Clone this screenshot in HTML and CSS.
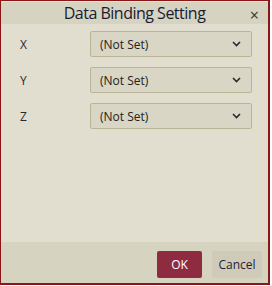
FILE: index.html
```html
<!DOCTYPE html>
<html>
<head>
<meta charset="utf-8">
<link rel="stylesheet" href="styles.css">
</head>
<body>
<div class="dialog">
  <div class="header">
    <span class="title">Data Binding Setting</span>
    <span class="close">×</span>
  </div>
  <div class="body">
    <div class="row">
      <span class="label">X</span>
      <div class="select"><span>(Not Set)</span><svg class="chev" width="9" height="6" viewBox="0 0 9 6"><path d="M1 1 L4.5 4.5 L8 1" fill="none" stroke="#2a2a2a" stroke-width="1.6"/></svg></div>
    </div>
    <div class="row">
      <span class="label">Y</span>
      <div class="select"><span>(Not Set)</span><svg class="chev" width="9" height="6" viewBox="0 0 9 6"><path d="M1 1 L4.5 4.5 L8 1" fill="none" stroke="#2a2a2a" stroke-width="1.6"/></svg></div>
    </div>
    <div class="row">
      <span class="label">Z</span>
      <div class="select"><span>(Not Set)</span><svg class="chev" width="9" height="6" viewBox="0 0 9 6"><path d="M1 1 L4.5 4.5 L8 1" fill="none" stroke="#2a2a2a" stroke-width="1.6"/></svg></div>
    </div>
  </div>
  <div class="footer">
    <button class="btn ok">OK</button>
    <button class="btn cancel">Cancel</button>
  </div>
</div>
</body>
</html>
```
FILE: styles.css
```css
html, body { margin: 0; padding: 0; background: #ffffff; }
body { font-family: "Open Sans", "Noto Sans", sans-serif; color: #1e1e2a; }
.dialog {
  box-sizing: border-box;
  width: 270px;
  height: 285px;
  border: 1px solid #8a1616;
  border-right-width: 2px;
  border-bottom-width: 2px;
  background: #e1ded0;
  display: flex;
  flex-direction: column;
}
.header {
  position: relative;
  height: 23px;
  border-top: 1px solid #e6e4d8;
  background: #d6d3c1;
  display: flex;
  align-items: center;
  justify-content: center;
  box-sizing: border-box;
}
.title { font-size: 16px; line-height: 22px; letter-spacing: -0.5px; color: #1a1a30; }
.close {
  position: absolute;
  right: 9px;
  top: 3px;
  font-size: 16px;
  line-height: 20px;
  color: #333;
}
.body {
  flex: 1;
  padding: 7px 16px 0 19px;
  display: flex;
  flex-direction: column;
  gap: 10px;
}
.row { display: flex; align-items: center; height: 26px; }
.label { width: 70px; font-size: 12px; color: #2a2a2a; }
.select {
  box-sizing: border-box;
  flex: 1;
  height: 26px;
  border: 1px solid #b9b595;
  border-radius: 2px;
  background: #d9d6c6;
  display: flex;
  align-items: center;
  justify-content: space-between;
  padding: 0 10px 0 9px;
  font-size: 12px;
  color: #222;
}
.chev { display: block; }
.footer {
  height: 41px;
  background: #d6d3c1;
  display: flex;
  justify-content: flex-end;
  align-items: flex-start;
  gap: 10px;
  padding: 9px 6px 0 0;
  box-sizing: border-box;
}
.btn {
  height: 27px;
  border: none;
  border-radius: 2px;
  font-family: "Open Sans", "Noto Sans", sans-serif;
  font-size: 12px;
  padding: 0;
}
.ok { width: 45px; background: #8f2b41; color: #ffffff; }
.cancel { width: 50px; background: #cfcbb8; color: #1e1e3a; }
```
